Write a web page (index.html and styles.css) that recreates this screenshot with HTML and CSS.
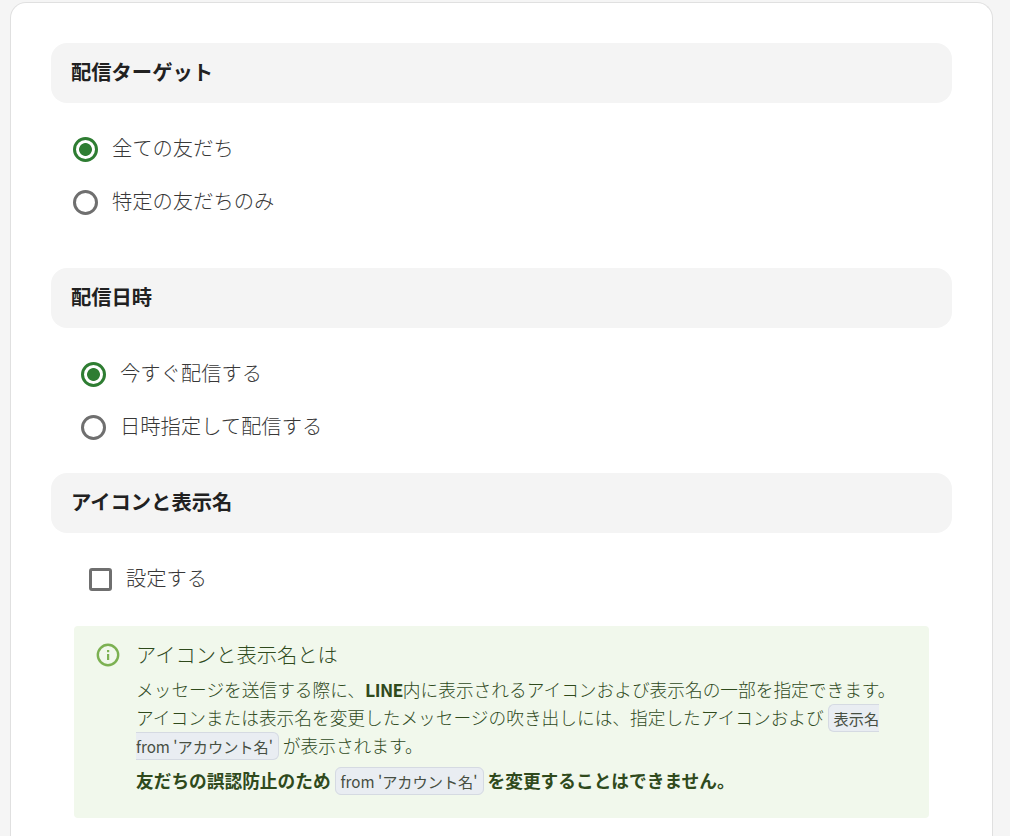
FILE: index.html
```html
<!DOCTYPE html>
<html lang="ja">
<head>
    <meta charset="UTF-8">
    <title>配信設定</title>
    <link rel="stylesheet" href="styles.css">
</head>
<body>
    <main class="card">
        <section class="block block-target">
            <h2 class="block-title">配信ターゲット</h2>
            <div class="options options-target">
                <label class="option"><input type="radio" name="target" checked><span class="option-text">全ての友だち</span></label>
                <label class="option"><input type="radio" name="target"><span class="option-text">特定の友だちのみ</span></label>
            </div>
        </section>

        <section class="block">
            <h2 class="block-title">配信日時</h2>
            <div class="options options-date">
                <label class="option"><input type="radio" name="date" checked><span class="option-text">今すぐ配信する</span></label>
                <label class="option"><input type="radio" name="date"><span class="option-text">日時指定して配信する</span></label>
            </div>
        </section>

        <section class="block">
            <h2 class="block-title">アイコンと表示名</h2>
            <div class="options options-icon">
                <label class="option"><input type="checkbox"><span class="option-text">設定する</span></label>
            </div>
            <div class="info">
                <svg class="info-icon" viewBox="0 0 24 24" width="24" height="24" fill="none">
                    <circle cx="12" cy="12" r="10.2" stroke="#7cb152" stroke-width="2.4"/>
                    <rect x="11" y="11" width="2.2" height="6" fill="#7cb152"/>
                    <rect x="11" y="7" width="2.2" height="2.2" fill="#7cb152"/>
                </svg>
                <div class="info-body">
                    <h3 class="info-title">アイコンと表示名とは</h3>
                    <p class="info-text">メッセージを送信する際に、<b class="brand">LINE</b>内に表示されるアイコンおよび表示名の一部を指定できます。<br>アイコンまたは表示名を変更したメッセージの吹き出しには、指定したアイコンおよび <code class="tag">表示名 from 'アカウント名'</code> が表示されます。</p>
                    <p class="info-note">友だちの誤認防止のため <code class="tag">from 'アカウント名'</code> を変更することはできません。</p>
                </div>
            </div>
        </section>
    </main>
</body>
</html>
```

FILE: styles.css
```css
html, body {
    height: 836px;
    overflow: hidden;
}
body {
    margin: 0;
    padding: 2px 17px 0 10px;
    box-sizing: border-box;
    background: #f5f5f5;
    color: #212121;
    font-family: "Noto Sans CJK JP", sans-serif;
}
.card {
    box-sizing: border-box;
    height: 834px;
    background: #fff;
    border: 1px solid #e0e0e0;
    border-bottom: 0;
    border-radius: 16px 16px 0 0;
    padding: 40px 40px 0;
}
.block-target {
    margin-bottom: 40px;
}
.block-title {
    box-sizing: border-box;
    margin: 0;
    height: 60px;
    padding: 0 20px 4px;
    display: flex;
    align-items: center;
    background: #f4f4f4;
    border-radius: 16px;
    font-size: 20.3px;
    font-weight: 700;
}
.options {
    display: flex;
    flex-direction: column;
    gap: 1px;
    padding-top: 20px;
    margin-bottom: 20px;
}
.block-target .options {
    margin-bottom: 0;
}
.options-target {
    padding-left: 22px;
}
.options-date {
    padding-left: 30px;
}
.options-icon {
    padding-left: 38px;
    margin-bottom: 21px;
}
.option {
    height: 52px;
    display: flex;
    align-items: center;
    gap: 14px;
    font-size: 20.3px;
    font-weight: 300;
    color: #383838;
}
.option-text {
    margin-top: -4px;
}
.option input {
    appearance: none;
    margin: 0;
    flex: none;
    width: 25px;
    height: 25px;
    background: #fff;
    border: 3px solid #6f6f6f;
    border-radius: 50%;
}
.option input:checked {
    border-color: #2e7d32;
    background: radial-gradient(circle, #2e7d32 0 6px, #fff 6.8px);
}
.option input[type="checkbox"] {
    width: 23px;
    height: 23px;
    border-radius: 3px;
}
.info {
    display: flex;
    gap: 16px;
    margin: 0 23px;
    height: 192px;
    box-sizing: border-box;
    padding: 17px 28px 0 22px;
    background: #f1f8ec;
    border-radius: 4px;
    color: #2f4a1c;
}
.info-icon {
    flex: none;
}
.info-title {
    margin: -4px 0 7px;
    font-size: 20.3px;
    font-weight: 300;
    line-height: 30px;
}
.info-text,
.info-note {
    margin: 0;
    font-size: 17.7px;
    font-weight: 300;
    line-height: 27.5px;
}
.info-note {
    margin-top: 6.5px;
    font-weight: 700;
}
.brand {
    font-weight: 700;
    letter-spacing: -0.6px;
}
.tag {
    padding: 2px 5px;
    background: #e9edf2;
    border: 1px solid #d5dae2;
    border-radius: 6px;
    color: #474f42;
    font-family: "Noto Sans CJK JP", sans-serif;
    font-size: 15.2px;
    font-weight: 400;
}
```
